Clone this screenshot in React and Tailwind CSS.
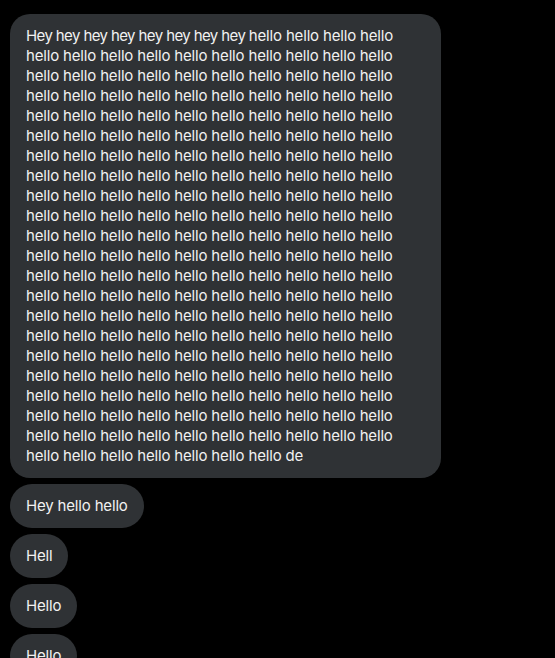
import React from "react";

const longText = Array(211).fill("hello").join(" ") + " de";

const messages = ["Hey hello hello", "Hell", "Hello", "Hello"];

const App = () => {
  return (
    <div
      className="min-h-screen bg-black px-[10px] pt-[14px] flex flex-col items-start gap-[6px]"
      style={{ fontFamily: "Inter, 'Noto Sans', sans-serif" }}
    >
      <div className="bg-[#2f3235] text-[#f1f1f1] text-[15px] tracking-[-0.17px] leading-5 px-4 py-3 max-w-[431px] rounded-[20px]">
        <span className="tracking-[-0.6px]">Hey hey hey hey hey hey hey hey </span>
        {longText}
      </div>
      {messages.map((msg, i) => (
        <div
          key={i}
          className="bg-[#2f3235] text-[#f1f1f1] text-[15px] tracking-[-0.17px] leading-5 px-4 py-3 rounded-full"
        >
          {msg}
        </div>
      ))}
    </div>
  );
};

export default App;
